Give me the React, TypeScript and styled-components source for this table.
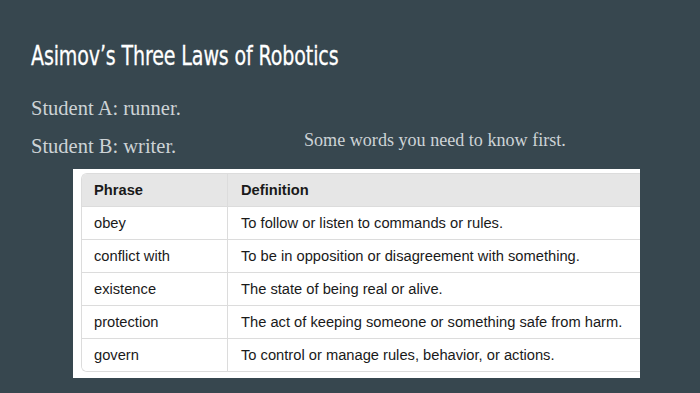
import React from "react";
import styled, { createGlobalStyle } from "styled-components";

const Global = createGlobalStyle`
  html, body { margin: 0; padding: 0; background: #37474f; }
  #root { width: 700px; height: 393px; }
`;

const Slide = styled.div`
  width: 700px;
  height: 393px;
  background: #37474f;
  box-sizing: border-box;
  padding: 38px 0 0 31px;
  display: flex;
  flex-direction: column;
  overflow: hidden;
`;

const Title = styled.h1`
  margin: 0;
  font-family: "DejaVu Sans", "Liberation Sans", sans-serif;
  font-weight: normal;
  font-size: 27px;
  line-height: 36px;
  color: #ffffff;
  -webkit-text-stroke: 0.3px #ffffff;
  letter-spacing: -0.2px;
  white-space: nowrap;
  transform: scaleX(0.706);
  transform-origin: left center;
`;

const Body = styled.div`
  display: grid;
  grid-template-columns: 273px auto;
  margin-top: 22px;
`;

const Students = styled.div`
  display: flex;
  flex-direction: column;
  gap: 14px;
`;

const Line = styled.p<{ $size?: number }>`
  margin: 0;
  font-family: "Liberation Serif", "DejaVu Serif", serif;
  font-size: ${(p) => p.$size ?? 20.5}px;
  line-height: 24px;
  color: #cdd3d6;
`;

const Note = styled(Line)`
  align-self: end;
  padding-bottom: 6px;
`;

const Shot = styled.div`
  margin: 11px 0 0 42px;
  width: 567px;
  height: 209px;
  background: #ffffff;
  box-sizing: border-box;
  padding: 4px 0 0 8px;
  overflow: hidden;
`;

const Table = styled.div`
  border: 1px solid #dcdcdc;
  border-right: none;
  border-radius: 6px 0 0 6px;
  overflow: hidden;
  display: grid;
  grid-template-columns: 146px 1fr;
  font-family: "Liberation Sans", Arial, sans-serif;
  font-size: 14.7px;
  color: #1a1a1a;
`;

const Cell = styled.div<{ $head?: boolean; $first?: boolean; $last?: boolean }>`
  height: 32px;
  display: flex;
  align-items: center;
  padding-left: ${(p) => (p.$first ? 12 : 13)}px;
  background: ${(p) => (p.$head ? "#e6e6e6" : "#ffffff")};
  font-weight: ${(p) => (p.$head ? 700 : 400)};
  border-right: ${(p) => (p.$first ? "1px solid #dcdcdc" : "none")};
  border-bottom: ${(p) => (p.$last ? "none" : "1px solid #dcdcdc")};
  white-space: nowrap;
`;

const rows: [string, string][] = [
  ["obey", "To follow or listen to commands or rules."],
  ["conflict with", "To be in opposition or disagreement with something."],
  ["existence", "The state of being real or alive."],
  ["protection", "The act of keeping someone or something safe from harm."],
  ["govern", "To control or manage rules, behavior, or actions."],
];

export default function App() {
  return (
    <>
      <Global />
      <Slide>
        <Title>Asimov’s Three Laws of Robotics</Title>
        <Body>
          <Students>
            <Line>Student A: runner.</Line>
            <Line>Student B: writer.</Line>
          </Students>
          <Note $size={18.1}>Some words you need to know first.</Note>
        </Body>
        <Shot>
          <Table>
            <Cell $head $first>Phrase</Cell>
            <Cell $head>Definition</Cell>
            {rows.map(([a, b], i) => (
              <React.Fragment key={a}>
                <Cell $first $last={i === rows.length - 1}>{a}</Cell>
                <Cell $last={i === rows.length - 1}>{b}</Cell>
              </React.Fragment>
            ))}
          </Table>
        </Shot>
      </Slide>
    </>
  );
}
